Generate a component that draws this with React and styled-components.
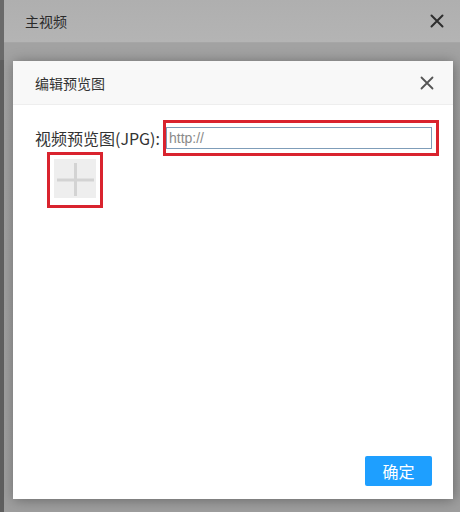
import React from 'react'
import styled, { createGlobalStyle } from 'styled-components'

const GlobalStyle = createGlobalStyle`
  html, body {
    margin: 0;
    padding: 0;
    background: #5e5e5e;
  }
  body {
    font-family: "Liberation Sans", "Noto Sans CJK SC", sans-serif;
  }
`

function CloseIcon({ size = 14, color = '#555', weight = 1.8 }) {
  return (
    <svg width={size} height={size} viewBox="0 0 14 14">
      <path d="M1.5 1.5 L12.5 12.5 M12.5 1.5 L1.5 12.5" stroke={color} strokeWidth={weight} strokeLinecap="round" fill="none" />
    </svg>
  )
}

function App() {
  return (
    <Page>
      <GlobalStyle />
      <BackStrip />
      <OuterDialog>
        <OuterHeader>
          <OuterTitle>主视频</OuterTitle>
          <CloseIcon size={14} color="#2e2e2e" weight={2} />
        </OuterHeader>
        <OuterBody />
      </OuterDialog>

      <Dialog>
        <Header>
          <Title>编辑预览图</Title>
          <CloseBtn>
            <CloseIcon size={14} color="#555" weight={1.8} />
          </CloseBtn>
        </Header>
        <Body>
          <Row>
            <Label>视频预览图(JPG):</Label>
            <Marked pad="4px 4px 4px 0px">
              <UrlInput placeholder="http://" />
            </Marked>
          </Row>
          <PlusWrap>
            <Marked pad="4px 4px 7px 4px">
              <AddBox>
                <svg width="42" height="39" viewBox="0 0 42 39">
                  <rect x="3" y="19.5" width="37" height="3" fill="#d3d3d3" />
                  <rect x="20" y="4" width="3" height="33" fill="#d3d3d3" />
                </svg>
              </AddBox>
            </Marked>
          </PlusWrap>
        </Body>
        <Footer>
          <Confirm>确定</Confirm>
        </Footer>
      </Dialog>
    </Page>
  )
}

export default App

const Page = styled.div`
  position: relative;
  width: 460px;
  height: 512px;
  overflow: hidden;
  display: flex;
  background: #5e5e5e;
`

const BackStrip = styled.div`
  width: 4px;
  flex-shrink: 0;
  background: linear-gradient(to bottom, #6a6a6a 0, #6a6a6a 60px, #5f5f5f 60px);
`

const OuterDialog = styled.div`
  flex: 1;
  display: flex;
  flex-direction: column;
  background: #a0a0a0;
`

const OuterHeader = styled.div`
  height: 42px;
  display: flex;
  align-items: center;
  justify-content: space-between;
  padding: 0 16px 0 21px;
  background: linear-gradient(to bottom, #afafaf, #b4b4b4);
  border-bottom: 1px solid #a6a6a6;
`

const OuterTitle = styled.span`
  font-family: "Noto Sans CJK SC", sans-serif;
  font-size: 14px;
  color: #2a2a2a;
`

const OuterBody = styled.div`
  flex: 1;
  background: linear-gradient(to bottom, #a2a2a2, #9e9e9e);
`

const Dialog = styled.div`
  position: absolute;
  left: 13px;
  top: 61px;
  width: 440px;
  height: 438px;
  display: flex;
  flex-direction: column;
  background: #fff;
  box-shadow: 1px 1px 12px rgba(0, 0, 0, 0.35);
`

const Header = styled.div`
  height: 43px;
  display: flex;
  align-items: center;
  justify-content: space-between;
  padding: 0 19px 0 22px;
  background: #f8f8f8;
  border-bottom: 1px solid #eeeeee;
`

const Title = styled.span`
  font-family: "Noto Sans CJK SC", sans-serif;
  font-size: 14px;
  color: #333;
`

const CloseBtn = styled.span`
  display: flex;
  cursor: pointer;
`

const Body = styled.div`
  flex: 1;
  padding: 15px 14px 0 22px;
`

const Row = styled.div`
  display: flex;
  align-items: center;
`

const Label = styled.span`
  font-family: "Noto Sans CJK SC", sans-serif;
  font-size: 16px;
  line-height: 20px;
  color: #333;
  margin-right: 3px;
`

const Marked = styled.div`
  display: flex;
  border: 3px solid #d9232e;
  padding: ${p => p.pad};
`

const UrlInput = styled.input`
  box-sizing: border-box;
  width: 266px;
  height: 22px;
  border: 1px solid #7f9db9;
  padding: 0 2px;
  font-family: "Liberation Sans", sans-serif;
  font-size: 14px;
  color: #333;
  outline: none;

  &::placeholder {
    color: #8a8a8a;
  }
`

const PlusWrap = styled.div`
  display: flex;
  margin: -4px 0 0 12px;
`

const AddBox = styled.div`
  width: 42px;
  height: 39px;
  display: flex;
  background: #eeeeee;
`

const Footer = styled.div`
  display: flex;
  justify-content: flex-end;
  padding: 0 21px 13px 0;
`

const Confirm = styled.button`
  width: 67px;
  height: 30px;
  border: none;
  border-radius: 2px;
  background: #1e9fff;
  color: #fff;
  font-family: "Noto Sans CJK SC", sans-serif;
  font-size: 16px;
  line-height: 30px;
  padding: 0;
  cursor: pointer;
`
